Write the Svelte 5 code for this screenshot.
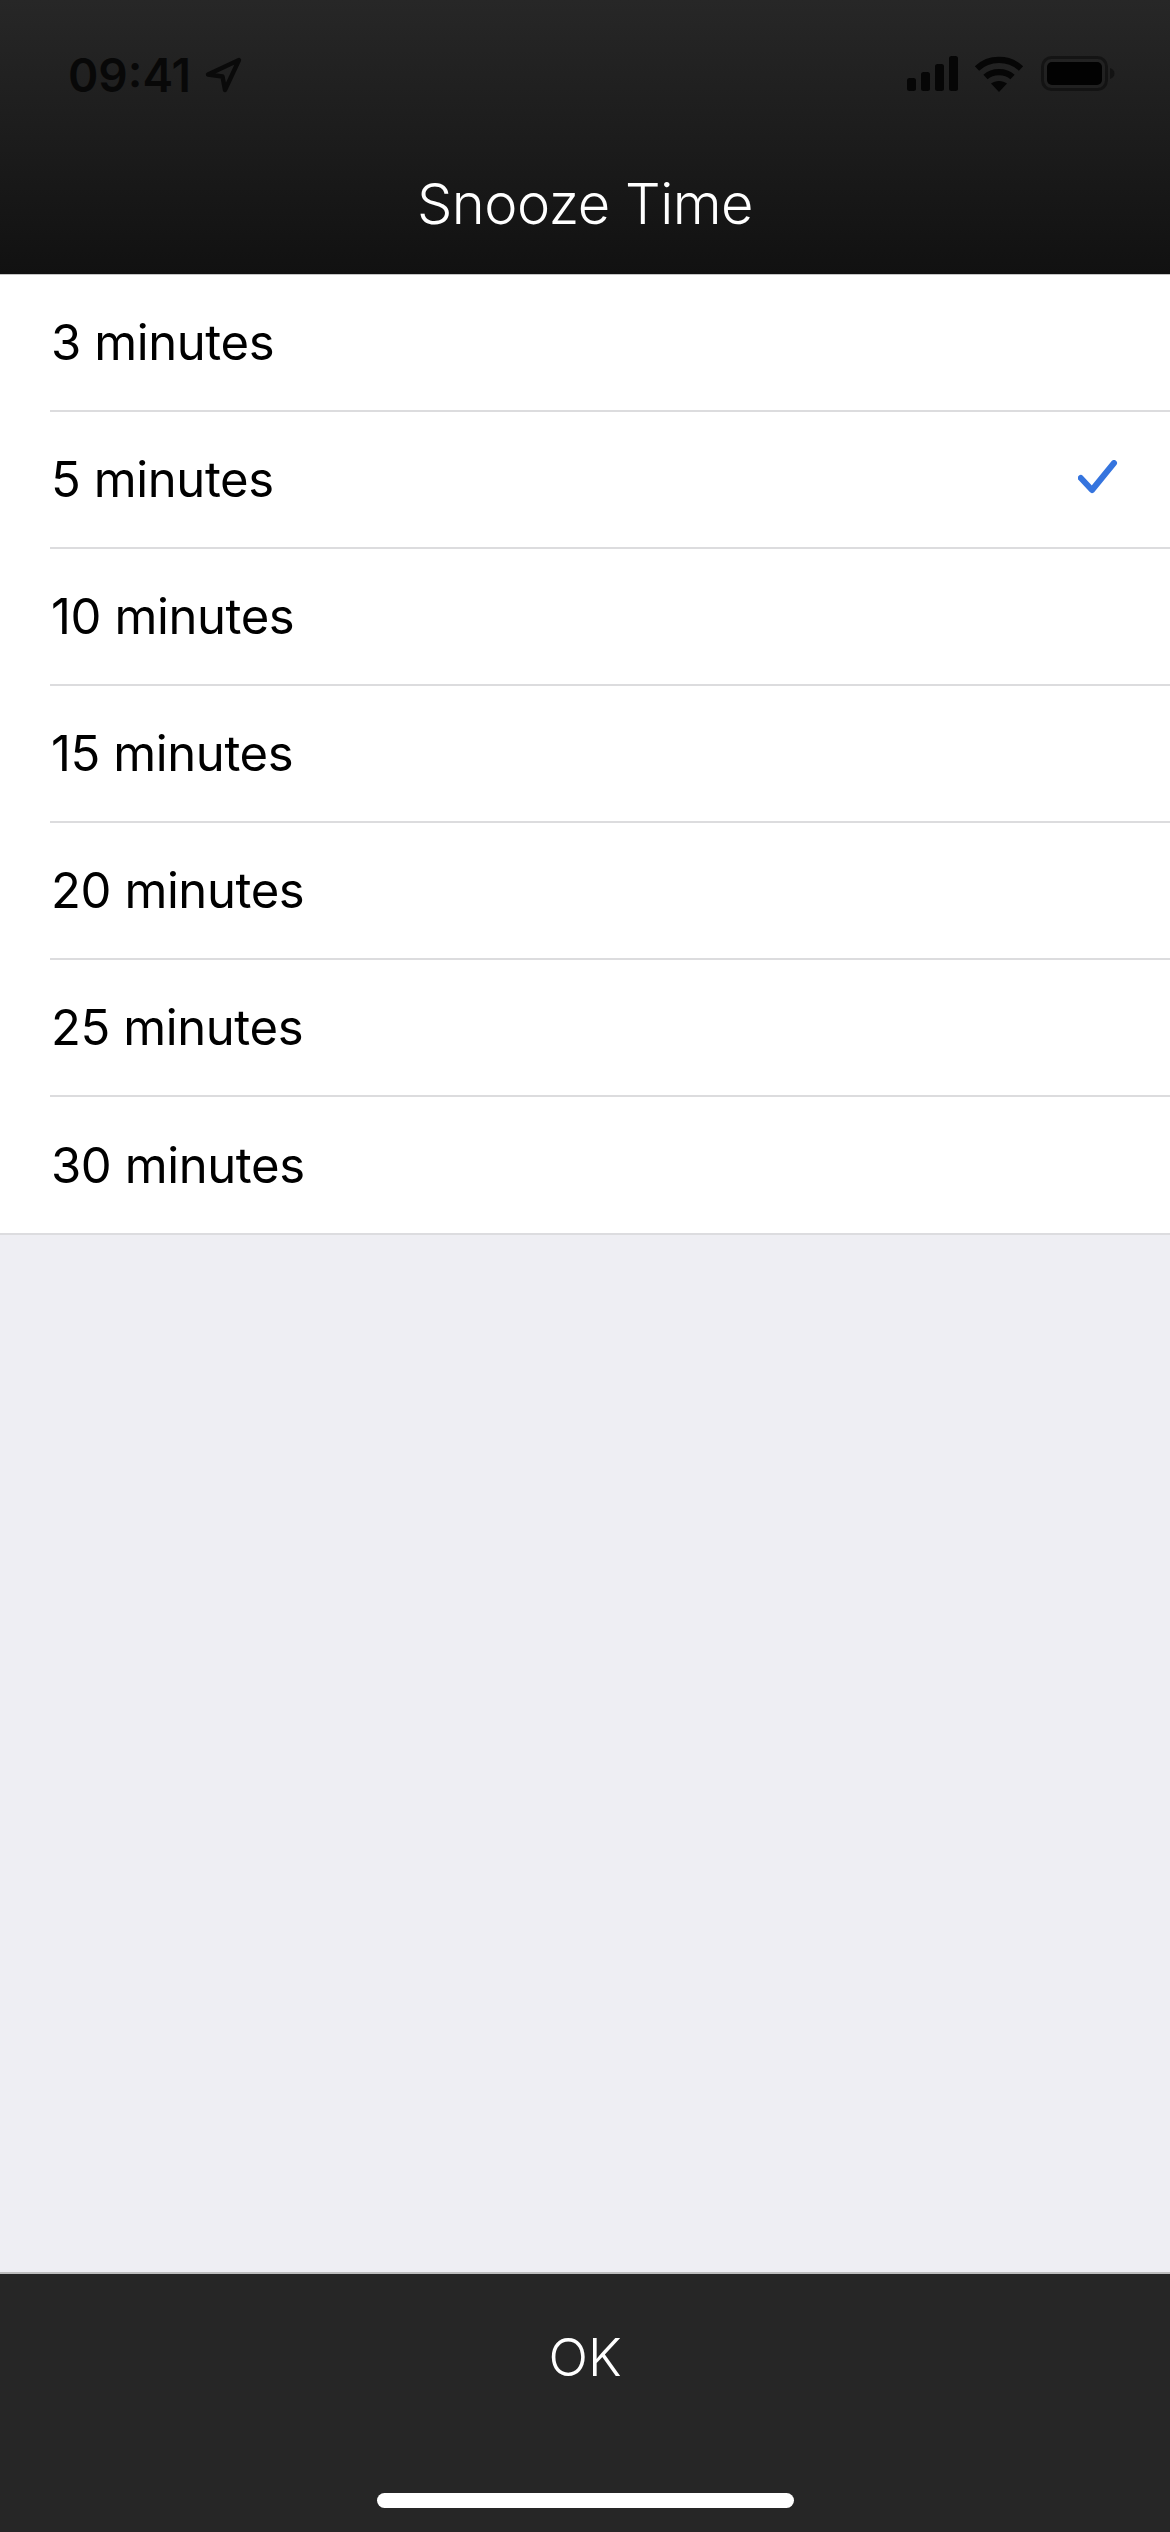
<script>
  const options = ['3 minutes', '5 minutes', '10 minutes', '15 minutes', '20 minutes', '25 minutes', '30 minutes'];
  const selected = '5 minutes';
</script>

<div class="screen">
  <header class="top">
    <div class="status">
      <div class="time-wrap">
        <span class="time">09:41</span>
        <svg class="loc" width="38" height="38" viewBox="0 0 38 38" aria-hidden="true">
          <path d="M35 4 L4 18.5 L18.5 20.5 L21 34 Z" fill="none" stroke="#0a0a0a" stroke-width="4.4" stroke-linejoin="round"/>
        </svg>
      </div>
      <div class="indicators">
        <svg width="54" height="36" viewBox="0 0 54 36" aria-hidden="true">
          <rect x="0" y="22" width="9" height="13" rx="2.5" fill="#060606"/>
          <rect x="14" y="16" width="9" height="19" rx="2.5" fill="#060606"/>
          <rect x="28" y="8" width="9" height="27" rx="2.5" fill="#060606"/>
          <rect x="42" y="0" width="9" height="35" rx="2.5" fill="#060606"/>
        </svg>
        <svg class="wifi" width="50" height="36" viewBox="0 0 50 36" aria-hidden="true">
          <g fill="none" stroke="#060606" stroke-width="6.2">
            <path d="M3 12.5 C15 1 35 1 47 12.5"/>
            <path d="M11.5 21 C18.5 14.5 31.500 14.500 38.500 21"/>
          </g>
          <path d="M17 27.500 C21.500 24 28.500 24 33 27.500 L25 36 Z" fill="#060606"/>
        </svg>
        <svg width="76" height="36" viewBox="0 0 76 36" aria-hidden="true">
          <rect x="1.500" y="1.500" width="64" height="32" rx="9" fill="none" stroke="#0a0a0a" stroke-opacity=".55" stroke-width="3"/>
          <rect x="6" y="6" width="55" height="23" rx="5" fill="#020202"/>
          <path d="M69 12 C72 13 73.500 15 73.500 17.500 C73.500 20 72 22 69 23 Z" fill="#0a0a0a" fill-opacity=".6"/>
        </svg>
      </div>
    </div>
    <h1>Snooze Time</h1>
  </header>

  <ul class="list">
    {#each options as option}
      <li class="row">
        <div class="row-inner">
          <span class="label">{option}</span>
          {#if option === selected}
            <svg class="check" width="40" height="40" viewBox="0 0 40 40" aria-hidden="true">
              <path d="M2.800 18 L14 30 L36 3" fill="none" stroke="#3574de" stroke-width="6" stroke-linecap="round" stroke-linejoin="round"/>
            </svg>
          {/if}
        </div>
      </li>
    {/each}
  </ul>

  <div class="spacer"></div>

  <footer class="bottom">
    <div class="ok">OK</div>
    <div class="home"></div>
  </footer>
</div>

<style>
  :global(body) {
    margin: 0;
  }

  .screen {
    width: 1170px;
    height: 2532px;
    display: flex;
    flex-direction: column;
    background: #eeeef3;
    font-family: Inter, "Liberation Sans", sans-serif;
    overflow: hidden;
  }

  .top {
    height: 274px;
    box-sizing: content-box;
    background: linear-gradient(#272727, #111111);
    border-bottom: 1px solid #c4c4c4;
    display: flex;
    flex-direction: column;
  }

  .status {
    height: 169px;
    padding: 49px 53px 0 68px;
    box-sizing: border-box;
    display: flex;
    justify-content: space-between;
    align-items: flex-start;
  }

  .time-wrap {
    display: flex;
    align-items: center;
    gap: 13px;
  }

  .time {
    font-size: 46px;
    line-height: 52px;
    font-weight: 600;
    color: #080808;
  }

  .indicators {
    display: flex;
    align-items: center;
    gap: 13px;
    padding-top: 7px;
  }

  .wifi {
    margin-right: 4px;
  }

  h1 {
    margin: 0;
    text-align: center;
    font-size: 56px;
    line-height: 70px;
    font-weight: 300;
    color: #ffffff;
    letter-spacing: -0.5px;
  }

  .list {
    list-style: none;
    margin: 0;
    padding: 0;
    background: #ffffff;
    border-bottom: 2px solid #dcdcdf;
  }

  .row {
    height: 137px;
    padding-left: 50px;
    box-sizing: border-box;
  }

  .row:last-child {
    height: 136px;
  }

  .row-inner {
    height: 100%;
    box-sizing: border-box;
    padding: 0 52px 0 1px;
    display: flex;
    align-items: center;
    justify-content: space-between;
    border-bottom: 2px solid #dcdcde;
  }

  .row:last-child .row-inner {
    border-bottom: 0;
  }

  .label {
    font-size: 49px;
    color: #000000;
    letter-spacing: -0.4px;
  }

  .check {
    display: block;
  }

  .spacer {
    flex: 1;
  }

  .bottom {
    height: 260px;
    box-sizing: border-box;
    background: #262626;
    border-top: 2px solid #bdbdbd;
    display: flex;
    flex-direction: column;
    align-items: center;
  }

  .ok {
    margin-top: 53px;
    font-size: 52px;
    line-height: 62px;
    font-weight: 300;
    color: #ffffff;
  }

  .home {
    margin-top: 104px;
    margin-left: 1px;
    width: 417px;
    height: 15px;
    border-radius: 8px;
    background: #ffffff;
  }
</style>
